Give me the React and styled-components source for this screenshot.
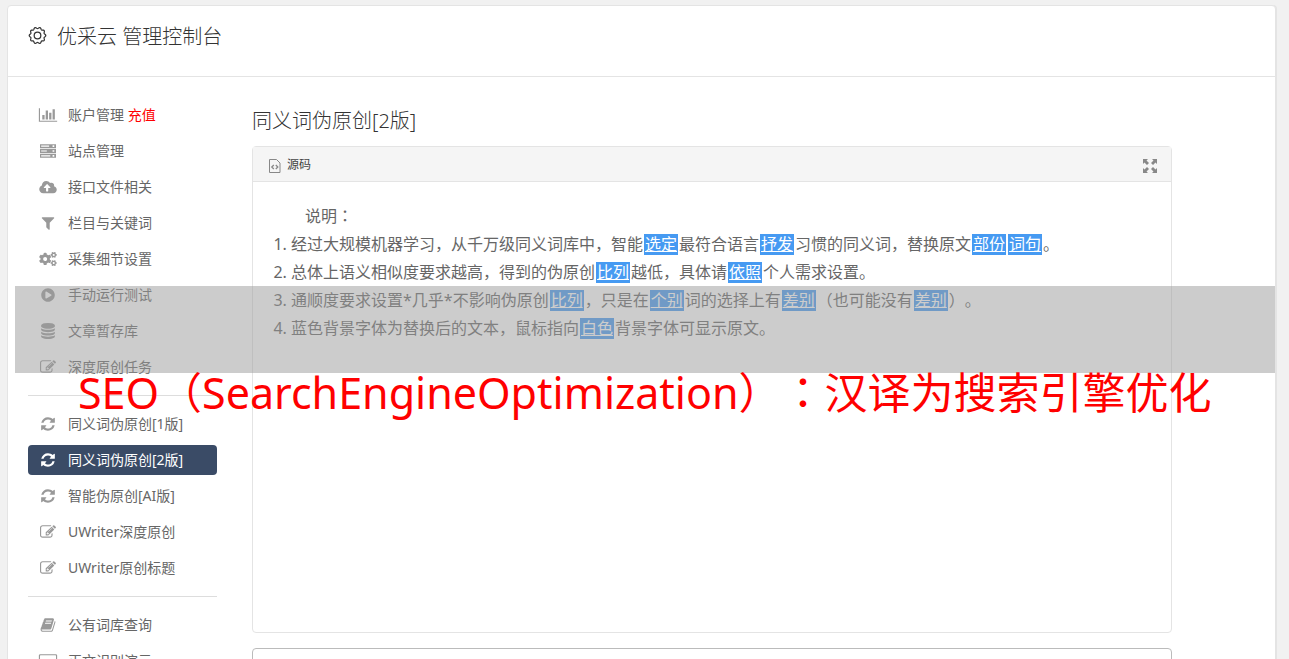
import React from "react";
import styled, { createGlobalStyle } from "styled-components";
import { FaCloudUploadAlt, FaCogs, FaPlayCircle } from "react-icons/fa";

const GlobalStyle = createGlobalStyle`
    * {
        box-sizing: border-box;
    }
    body {
        margin: 0;
        background-color: #f1f1f1;
        color: #666;
        font-family: "Noto Sans", "Noto Sans CJK SC", sans-serif;
        font-size: 14px;
        font-weight: 400;
        text-spacing-trim: space-all;
        overflow: hidden;
    }
`;

const Page = styled.div`
    padding: 5px 13px 0 7px;
    height: 100vh;
    overflow: hidden;
`;

const Card = styled.div`
    min-height: 120vh;
    background-color: #fff;
    border: 1px solid #e4e4e4;
    border-radius: 4px;
    box-shadow: 1px 0 0 #e4e4e4;
`;

const Header = styled.header`
    display: flex;
    align-items: flex-start;
    gap: 10px;
    height: 71px;
    padding: 16px 20px;
    border-bottom: 1px solid #e4e4e4;
    color: #333;
`;

const Brand = styled.h1`
    margin: 0;
    font-size: 20px;
    font-weight: 300;
    line-height: 30px;
`;

const HeaderIcon = styled.svg`
    width: 19px;
    height: 19px;
    margin-top: 4px;
    fill: none;
    stroke: #333;
    stroke-width: 1.3;
`;

const Body = styled.div`
    display: flex;
    align-items: flex-start;
    gap: 35px;
    padding: 23px 20px 0 20px;
`;

const Sidebar = styled.nav`
    flex: none;
    width: 189px;
`;

const Menu = styled.ul`
    display: flex;
    flex-direction: column;
    gap: 6px;
    margin: 0;
    padding: 0;
    list-style: none;
`;

const MenuLink = styled.a`
    display: flex;
    align-items: center;
    gap: 10px;
    height: 30px;
    padding: 0 10px;
    border-radius: 4px;
    color: ${props => props.$active ? "#fff" : "#666"};
    background-color: ${props => props.$active ? "#3a4b66" : "transparent"};
    line-height: 20px;
    text-decoration: none;
    white-space: nowrap;

    svg {
        flex: none;
        width: 20px;
        height: ${props => props.$iconSize || 16}px;
        fill: ${props => props.$active ? "#fff" : "#999"};
    }
`;

const Recharge = styled.span`
    color: #f00;
`;

const Divider = styled.hr`
    height: 1px;
    margin: 13px 0;
    border: none;
    background-color: #ddd;
`;

const Main = styled.main`
    flex: 1;
    max-width: 920px;
    min-width: 0;
`;

const Title = styled.h2`
    margin: 6px 0 10px;
    color: #333;
    font-size: 20px;
    font-weight: 300;
    line-height: 30px;
`;

const Editor = styled.section`
    border: 1px solid #e4e4e4;
    border-radius: 4px;
`;

const Toolbar = styled.div`
    display: flex;
    align-items: center;
    justify-content: space-between;
    height: 35px;
    padding: 0 14px 0 16px;
    border-bottom: 1px solid #e4e4e4;
    background-color: #f5f5f5;
`;

const ToolButton = styled.button`
    display: flex;
    align-items: center;
    gap: 6px;
    padding: 0;
    border: none;
    background: none;
    color: #444;
    font: inherit;
    font-size: 12px;

    svg {
        display: block;
        margin-top: 3px;
    }
`;

const Content = styled.div`
    min-height: 450px;
    padding: 19px 20px;
    font-size: 16px;
    line-height: 28px;
`;

const Intro = styled.p`
    margin: 0;
    padding-left: 32px;
`;

const Steps = styled.ol`
    margin: 0;
    padding-left: 18px;
`;

const Swap = styled.span`
    margin: 0 1px;
    padding: 0 1px;
    background: linear-gradient(#469af2, #469af2) center / 100% 21px no-repeat;
    color: #fff;
    text-decoration: underline;
`;

const Colon = styled.span`
    font-family: "Noto Sans CJK TC", sans-serif;
`;

const Source = styled.textarea`
    display: block;
    width: 100%;
    height: 120px;
    margin-top: 15px;
    border: 1px solid #bbb;
    border-radius: 4px;
    resize: none;
`;

const Shade = styled.div`
    position: absolute;
    top: 286px;
    left: 15px;
    right: 14px;
    height: 87px;
    background-color: rgba(153, 153, 153, 0.5);
`;

const Caption = styled.div`
    position: absolute;
    top: 360px;
    left: 78px;
    color: #f00;
    font-size: 43px;
    line-height: 60px;
    white-space: nowrap;
`;

const paths = {
    chart: "M640 896v512H384V896h256zm384-512v1024H768V384h256zm1024 1152v128H0V128h128v1408h1920zm-640-896v768h-256V640h256zm384-384v1152h-256V256h256z",
    server: "M0 128h1792v448H0zM128 288v128h896V288zM1408 256v192h192V256zM0 672h1792v448H0zM128 832v128h640V832zM1408 800v192h192V800zM0 1216h1792v448H0zM128 1376v128h1024v-128zM1408 1344v192h192v-192z",
    filter: "M1595 295q17 41-14 70l-493 493v742q0 42-39 59-13 5-25 5-27 0-45-19l-256-256q-19-19-19-45V858L211 365q-31-29-14-70 17-39 59-39h1280q42 0 59 39z",
    database: "M896 768q237 0 443-43t325-127v170q0 69-103 128t-280 93.5-385 34.5-385-34.5-280-93.5-103-128V598q119 84 325 127t443 43zm0 768q237 0 443-43t325-127v170q0 69-103 128t-280 93.5-385 34.5-385-34.5-280-93.5-103-128v-170q119 84 325 127t443 43zm0-384q237 0 443-43t325-127v170q0 69-103 128t-280 93.5-385 34.5-385-34.5-280-93.5-103-128V982q119 84 325 127t443 43zM896 0q208 0 385 34.5t280 93.5 103 128v128q0 69-103 128t-280 93.5T896 640t-385-34.5T231 512 128 384V256q0-69 103-128t280-93.5T896 0z",
    edit: "M888 1184l116-116-152-152-116 116v56h96v96h56zm440-720q-16-16-33 1L945 815q-17 17-1 33t33-1l350-350q17-17 1-33zm80 594v190q0 119-84.5 203.5T1120 1536H288q-119 0-203.5-84.5T0 1248V416q0-119 84.5-203.5T288 128h832q63 0 117 25 15 7 18 23 3 17-9 29l-49 49q-14 14-32 8-23-6-45-6H288q-66 0-113 47t-47 113v832q0 66 47 113t113 47h832q66 0 113-47t47-113v-126q0-13 9-22l64-64q15-15 35-7t20 29zm-96-738l288 288-672 672H640V928zm444 132l-92 92-288-288 92-92q28-28 68-28t68 28l152 152q28 28 28 68t-28 68z",
    refresh: "M1639 1056q0 5-1 7-64 268-268 434.5T892 1664q-146 0-282.5-55T366 1452l-129 129q-19 19-45 19t-45-19-19-45v-448q0-26 19-45t45-19h448q26 0 45 19t19 45-19 45l-137 137q71 66 161 102t187 36q134 0 250-65t186-179q11-17 53-117 8-23 30-23h192q13 0 22.5 9.5t9.5 22.5zm25-800v448q0 26-19 45t-45 19h-448q-26 0-45-19t-19-45 19-45l138-138q-148-137-349-137-134 0-250 65T460 628q-11 17-53 117-8 23-30 23H178q-13 0-22.5-9.5T146 736v-7q65-268 270-434.5T896 128q146 0 284 55.5T1425 340l130-129q19-19 45-19t45 19 19 45z",
    book: "M1703 478q40 57 18 129l-275 906q-19 64-76.5 107.5T1247 1664H324q-77 0-148.5-53.5T76 1479q-24-67-2-127 0-4 3-27t4-37q1-8-3-21.5t-3-19.5q2-11 8-21t16.5-23.5T116 1179q23-38 45-91.5t30-91.5q3-10 .5-30t-.5-28q3-11 17-28t17-23q21-36 42-92t25-90q1-9-2.5-32t.5-28q4-13 22-30.5t22-22.5q19-26 42.5-84.5T404 411q1-8-3-25.5t-2-26.5q2-8 9-18t18-23 17-21q8-12 16.5-30.5t15-35 16-36 19.5-32T533.5 140t36-11.5T617 134l-1 3q38-9 51-9h761q74 0 114 56t18 130l-274 906q-36 119-71.5 153.5T1086 1408H217q-27 0-38 15-11 16-1 43 24 70 144 70h923q29 0 56-15.5t35-41.5l300-987q7-22 5-57 38 15 59 43zm-1064 2q-4 13 2 22.5t20 9.5h608q13 0 25.5-9.5T1311 480l21-64q4-13-2-22.5t-20-9.5H702q-13 0-25.5 9.5T660 416zm-83 256q-4 13 2 22.5t20 9.5h608q13 0 25.5-9.5T1228 736l21-64q4-13-2-22.5t-20-9.5H619q-13 0-25.5 9.5T577 672z",
    screen: "M160 128h1728q66 0 113 47t47 113v1088q0 66-47 113t-113 47h-544v128h128v128H576v-128h128v-128H160q-66 0-113-47T0 1376V288q0-66 47-113t113-47zm32 128q-64 0-64 64v832h1792V320q0-64-64-64z",
};

function Glyph({name, wide}){
    return (
        <svg viewBox={wide ? "0 0 2048 1792" : "0 0 1792 1792"} fillRule="evenodd" aria-hidden="true">
            <path d={paths[name]}/>
        </svg>
    );
}

const groups = [
    [
        {title: "账户管理", extra: "充值", icon: <Glyph name="chart" wide/>},
        {title: "站点管理", icon: <Glyph name="server"/>},
        {title: "接口文件相关", icon: <FaCloudUploadAlt/>, iconSize: 14},
        {title: "栏目与关键词", icon: <Glyph name="filter"/>},
        {title: "采集细节设置", icon: <FaCogs/>, iconSize: 14},
        {title: "手动运行测试", icon: <FaPlayCircle/>, iconSize: 14},
        {title: "文章暂存库", icon: <Glyph name="database"/>},
        {title: "深度原创任务", icon: <Glyph name="edit"/>},
    ],
    [
        {title: "同义词伪原创[1版]", icon: <Glyph name="refresh"/>},
        {title: "同义词伪原创[2版]", icon: <Glyph name="refresh"/>, active: true},
        {title: "智能伪原创[AI版]", icon: <Glyph name="refresh"/>},
        {title: "UWriter深度原创", icon: <Glyph name="edit"/>},
        {title: "UWriter原创标题", icon: <Glyph name="edit"/>},
    ],
    [
        {title: "公有词库查询", icon: <Glyph name="book"/>},
        {title: "正文识别演示", icon: <Glyph name="screen" wide/>},
    ],
];

// scalloped ring with ten lobes
function gearPath(){
    const points = [];
    for(let i = 0; i <= 120; i++){
        const a = i / 120 * Math.PI * 2;
        const r = 8 + 0.7 * Math.cos(a * 10);
        points.push((10 + r * Math.cos(a)).toFixed(2) + " " + (10 + r * Math.sin(a)).toFixed(2));
    }
    return "M" + points.join("L") + "Z";
}

export default function App(){
    return (
        <>
            <GlobalStyle/>
            <Page>
                <Card>
                    <Header>
                        <HeaderIcon viewBox="0 0 20 20" aria-hidden="true">
                            <path d={gearPath()}/>
                            <circle cx="10" cy="10" r="3.5"/>
                        </HeaderIcon>
                        <Brand>优采云 管理控制台</Brand>
                    </Header>
                    <Body>
                        <Sidebar>
                            {groups.map((items, i) => (
                                <React.Fragment key={i}>
                                    {i > 0 && <Divider/>}
                                    <Menu>
                                        {items.map(item => (
                                            <li key={item.title}>
                                                <MenuLink href="#" $active={item.active} $iconSize={item.iconSize}>
                                                    {item.icon}
                                                    <span>{item.title}{item.extra && <Recharge> {item.extra}</Recharge>}</span>
                                                </MenuLink>
                                            </li>
                                        ))}
                                    </Menu>
                                </React.Fragment>
                            ))}
                        </Sidebar>
                        <Main>
                            <Title>同义词伪原创[2版]</Title>
                            <Editor>
                                <Toolbar>
                                    <ToolButton type="button">
                                        <svg width="12" height="14" viewBox="0 0 12 14" fill="none" stroke="#888" aria-hidden="true">
                                            <path d="M.5.5h7l3.500 3.500v9.500H.5z"/>
                                            <path strokeWidth="1.3" d="M4.800 6L2.800 8l2 2M6.800 6l2 2-2 2"/>
                                        </svg>
                                        源码
                                    </ToolButton>
                                    <ToolButton type="button" aria-label="全屏">
                                        <svg width="14" height="14" viewBox="0 0 14 14" fill="#888" aria-hidden="true">
                                            <path d="M0 0h5L3.500 1.500 6 4 4 6 1.500 3.500 0 5zM14 0v5l-1.500-1.500L10 6 8 4l2.500-2.500L9 0zM0 14V9l1.500 1.500L4 8l2 2-2.500 2.500L5 14zM14 14H9l1.500-1.500L8 10l2-2 2.500 2.500L14 9z"/>
                                        </svg>
                                    </ToolButton>
                                </Toolbar>
                                <Content>
                                    <Intro>说明<Colon>：</Colon></Intro>
                                    <Steps>
                                        <li>经过大规模机器学习，从千万级同义词库中，智能<Swap>选定</Swap>最符合语言<Swap>抒发</Swap>习惯的同义词，替换原文<Swap>部份</Swap><Swap>词句</Swap>。</li>
                                        <li>总体上语义相似度要求越高，得到的伪原创<Swap>比列</Swap>越低，具体请<Swap>依照</Swap>个人需求设置。</li>
                                        <li>通顺度要求设置*几乎*不影响伪原创<Swap>比列</Swap>，只是在<Swap>个别</Swap>词的选择上有<Swap>差别</Swap>（也可能没有<Swap>差别</Swap>）。</li>
                                        <li>蓝色背景字体为替换后的文本，鼠标指向<Swap>白色</Swap>背景字体可显示原文。</li>
                                    </Steps>
                                </Content>
                            </Editor>
                            <Source aria-label="源码"/>
                        </Main>
                    </Body>
                </Card>
            </Page>
            <Shade/>
            <Caption>SEO（SearchEngineOptimization）<Colon>：</Colon>汉译为搜索引擎优化</Caption>
        </>
    );
}
